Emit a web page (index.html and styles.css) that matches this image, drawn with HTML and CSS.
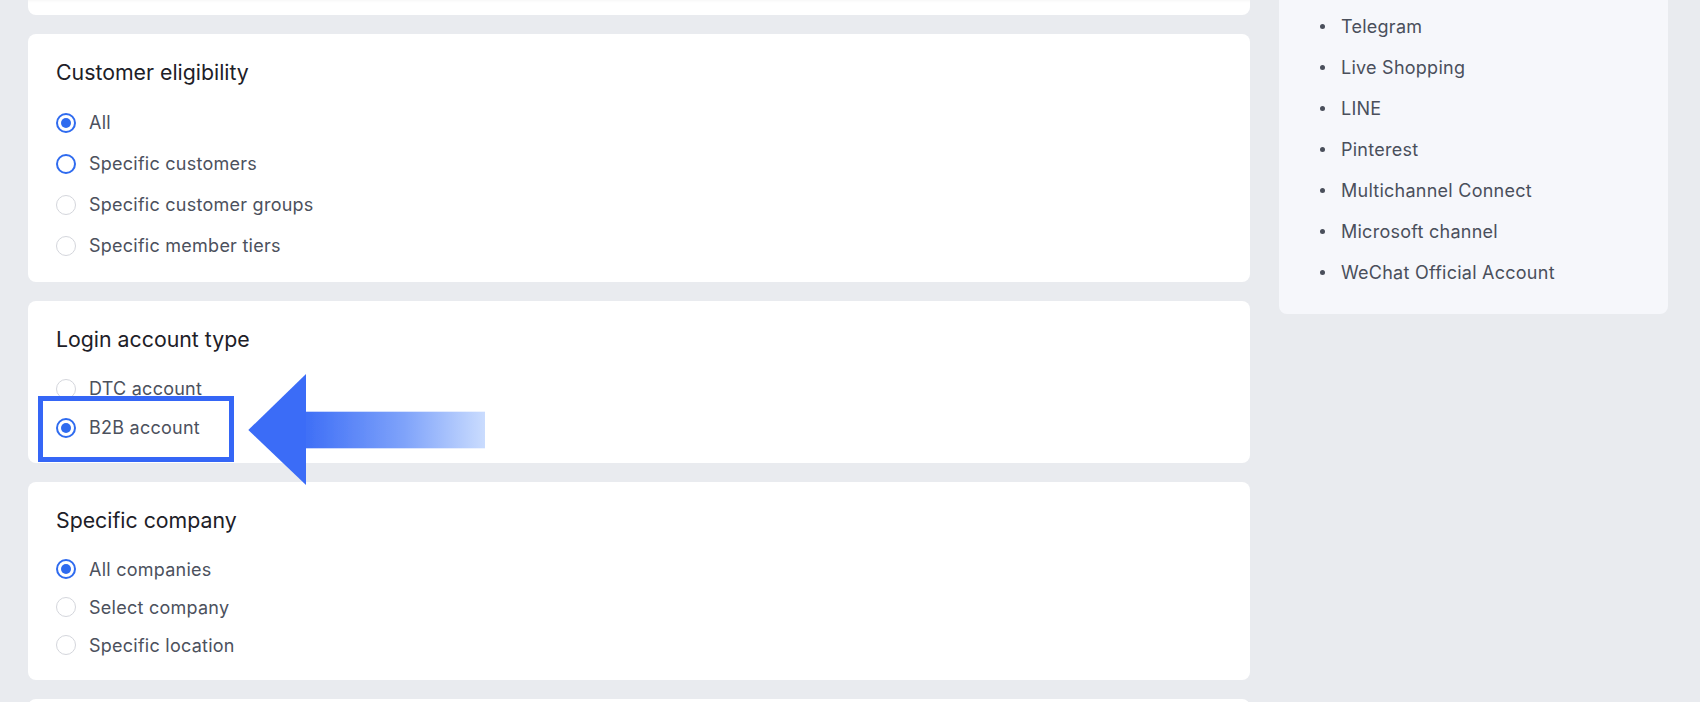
FILE: index.html
```html
<!DOCTYPE html>
<html lang="en">
<head>
<meta charset="utf-8">
<title>Discount settings</title>
<link rel="stylesheet" href="styles.css">
</head>
<body>
<div class="page">
  <div class="main">
    <div class="card card-stub"></div>

    <section class="card">
      <h2 class="card-title">Customer eligibility</h2>
      <ul class="options options-lg">
        <li class="option"><span class="radio checked"></span><span class="label">All</span></li>
        <li class="option"><span class="radio hover"></span><span class="label">Specific customers</span></li>
        <li class="option"><span class="radio"></span><span class="label">Specific customer groups</span></li>
        <li class="option"><span class="radio"></span><span class="label">Specific member tiers</span></li>
      </ul>
    </section>

    <section class="card">
      <h2 class="card-title">Login account type</h2>
      <ul class="options options-md">
        <li class="option"><span class="radio"></span><span class="label">DTC account</span></li>
        <li class="option"><span class="radio checked"></span><span class="label">B2B account</span></li>
      </ul>
    </section>

    <section class="card">
      <h2 class="card-title">Specific company</h2>
      <ul class="options options-sm">
        <li class="option"><span class="radio checked"></span><span class="label">All companies</span></li>
        <li class="option"><span class="radio"></span><span class="label">Select company</span></li>
        <li class="option"><span class="radio"></span><span class="label">Specific location</span></li>
      </ul>
    </section>

    <section class="card card-next"></section>

    <div class="highlight-box"></div>
    <svg class="pointer-arrow" width="250" height="120" viewBox="0 0 250 120" aria-hidden="true">
      <defs>
        <linearGradient id="shaftGrad" x1="66" y1="0" x2="245" y2="0" gradientUnits="userSpaceOnUse">
          <stop offset="0" stop-color="#3f6ff6"/>
          <stop offset="0.55" stop-color="#7fa3fa"/>
          <stop offset="1" stop-color="#cadcfe"/>
        </linearGradient>
        <filter id="soft" x="-5%" y="-5%" width="110%" height="110%">
          <feGaussianBlur stdDeviation="0.6"/>
        </filter>
      </defs>
      <g filter="url(#soft)">
        <rect x="65" y="41.7" width="180" height="36.6" fill="url(#shaftGrad)"/>
        <polygon points="8.3,60 66,4 66,115" fill="#3b6cf7"/>
      </g>
    </svg>
  </div>

  <aside class="sidebar">
    <ul class="channel-list">
      <li>Telegram</li>
      <li>Live Shopping</li>
      <li>LINE</li>
      <li>Pinterest</li>
      <li>Multichannel Connect</li>
      <li>Microsoft channel</li>
      <li>WeChat Official Account</li>
    </ul>
  </aside>
</div>
</body>
</html>
```

FILE: styles.css
```css
* {
  box-sizing: border-box;
}

html, body {
  margin: 0;
  padding: 0;
  height: 100%;
  overflow: hidden;
}

body {
  background: #e9ebef;
  font-family: Inter, "Noto Sans", "Liberation Sans", sans-serif;
  color: #4a4f5b;
}

.page {
  display: flex;
  align-items: flex-start;
  gap: 29px;
  padding-left: 28px;
}

.main {
  position: relative;
  width: 1222px;
  display: flex;
  flex-direction: column;
  gap: 19px;
}

.card {
  background: #ffffff;
  border-radius: 8px;
  padding: 26px 28px 16px;
}

.card-stub {
  height: 15px;
  padding: 0;
  border-radius: 0 0 8px 8px;
  box-shadow: inset 0 3px 3px -2px rgba(0, 0, 0, 0.04);
}

.card-next {
  height: 8px;
  padding: 0;
  border-radius: 8px 8px 0 0;
}

.card-title {
  margin: 0 0 18px;
  font-size: 21.3px;
  line-height: 24px;
  font-weight: 400;
  color: #1d2027;
}

.options {
  list-style: none;
  margin: 0;
  padding: 0;
}

.option {
  display: flex;
  align-items: center;
  gap: 13px;
  font-size: 18px;
  letter-spacing: 0.25px;
  color: #4c515d;
}

.options-lg .option { height: 41px; }
.options-md .option { height: 39px; }
.options-sm .option { height: 38px; }

.radio {
  flex: none;
  width: 20px;
  height: 20px;
  border-radius: 50%;
  border: 1.5px solid #d4d6dc;
  background: #fff;
  position: relative;
}

.radio.hover {
  border: 2px solid #2f6bef;
}

.radio.checked {
  border: 2px solid #2f6bef;
}

.radio.checked::after {
  content: "";
  position: absolute;
  left: 50%;
  top: 50%;
  width: 10px;
  height: 10px;
  margin: -5px 0 0 -5px;
  border-radius: 50%;
  background: #2f6bef;
}

.highlight-box {
  position: absolute;
  left: 10px;
  top: 396px;
  width: 196px;
  height: 66px;
  border: 5px solid #3566f6;
  z-index: 2;
}

.pointer-arrow {
  position: absolute;
  left: 212px;
  top: 370px;
  z-index: 2;
}

.sidebar {
  width: 389px;
  background: #f6f7fb;
  border-radius: 0 0 8px 8px;
  padding: 6px 0 21px 62px;
}

.channel-list {
  list-style: none;
  margin: 0;
  padding: 0;
}

.channel-list li {
  position: relative;
  height: 41px;
  line-height: 41px;
  font-size: 18px;
  letter-spacing: 0.25px;
  color: #4a4f5b;
}

.channel-list li::before {
  content: "";
  position: absolute;
  left: -21px;
  top: 18px;
  width: 5px;
  height: 5px;
  border-radius: 50%;
  background: #4a4f5b;
}
```
